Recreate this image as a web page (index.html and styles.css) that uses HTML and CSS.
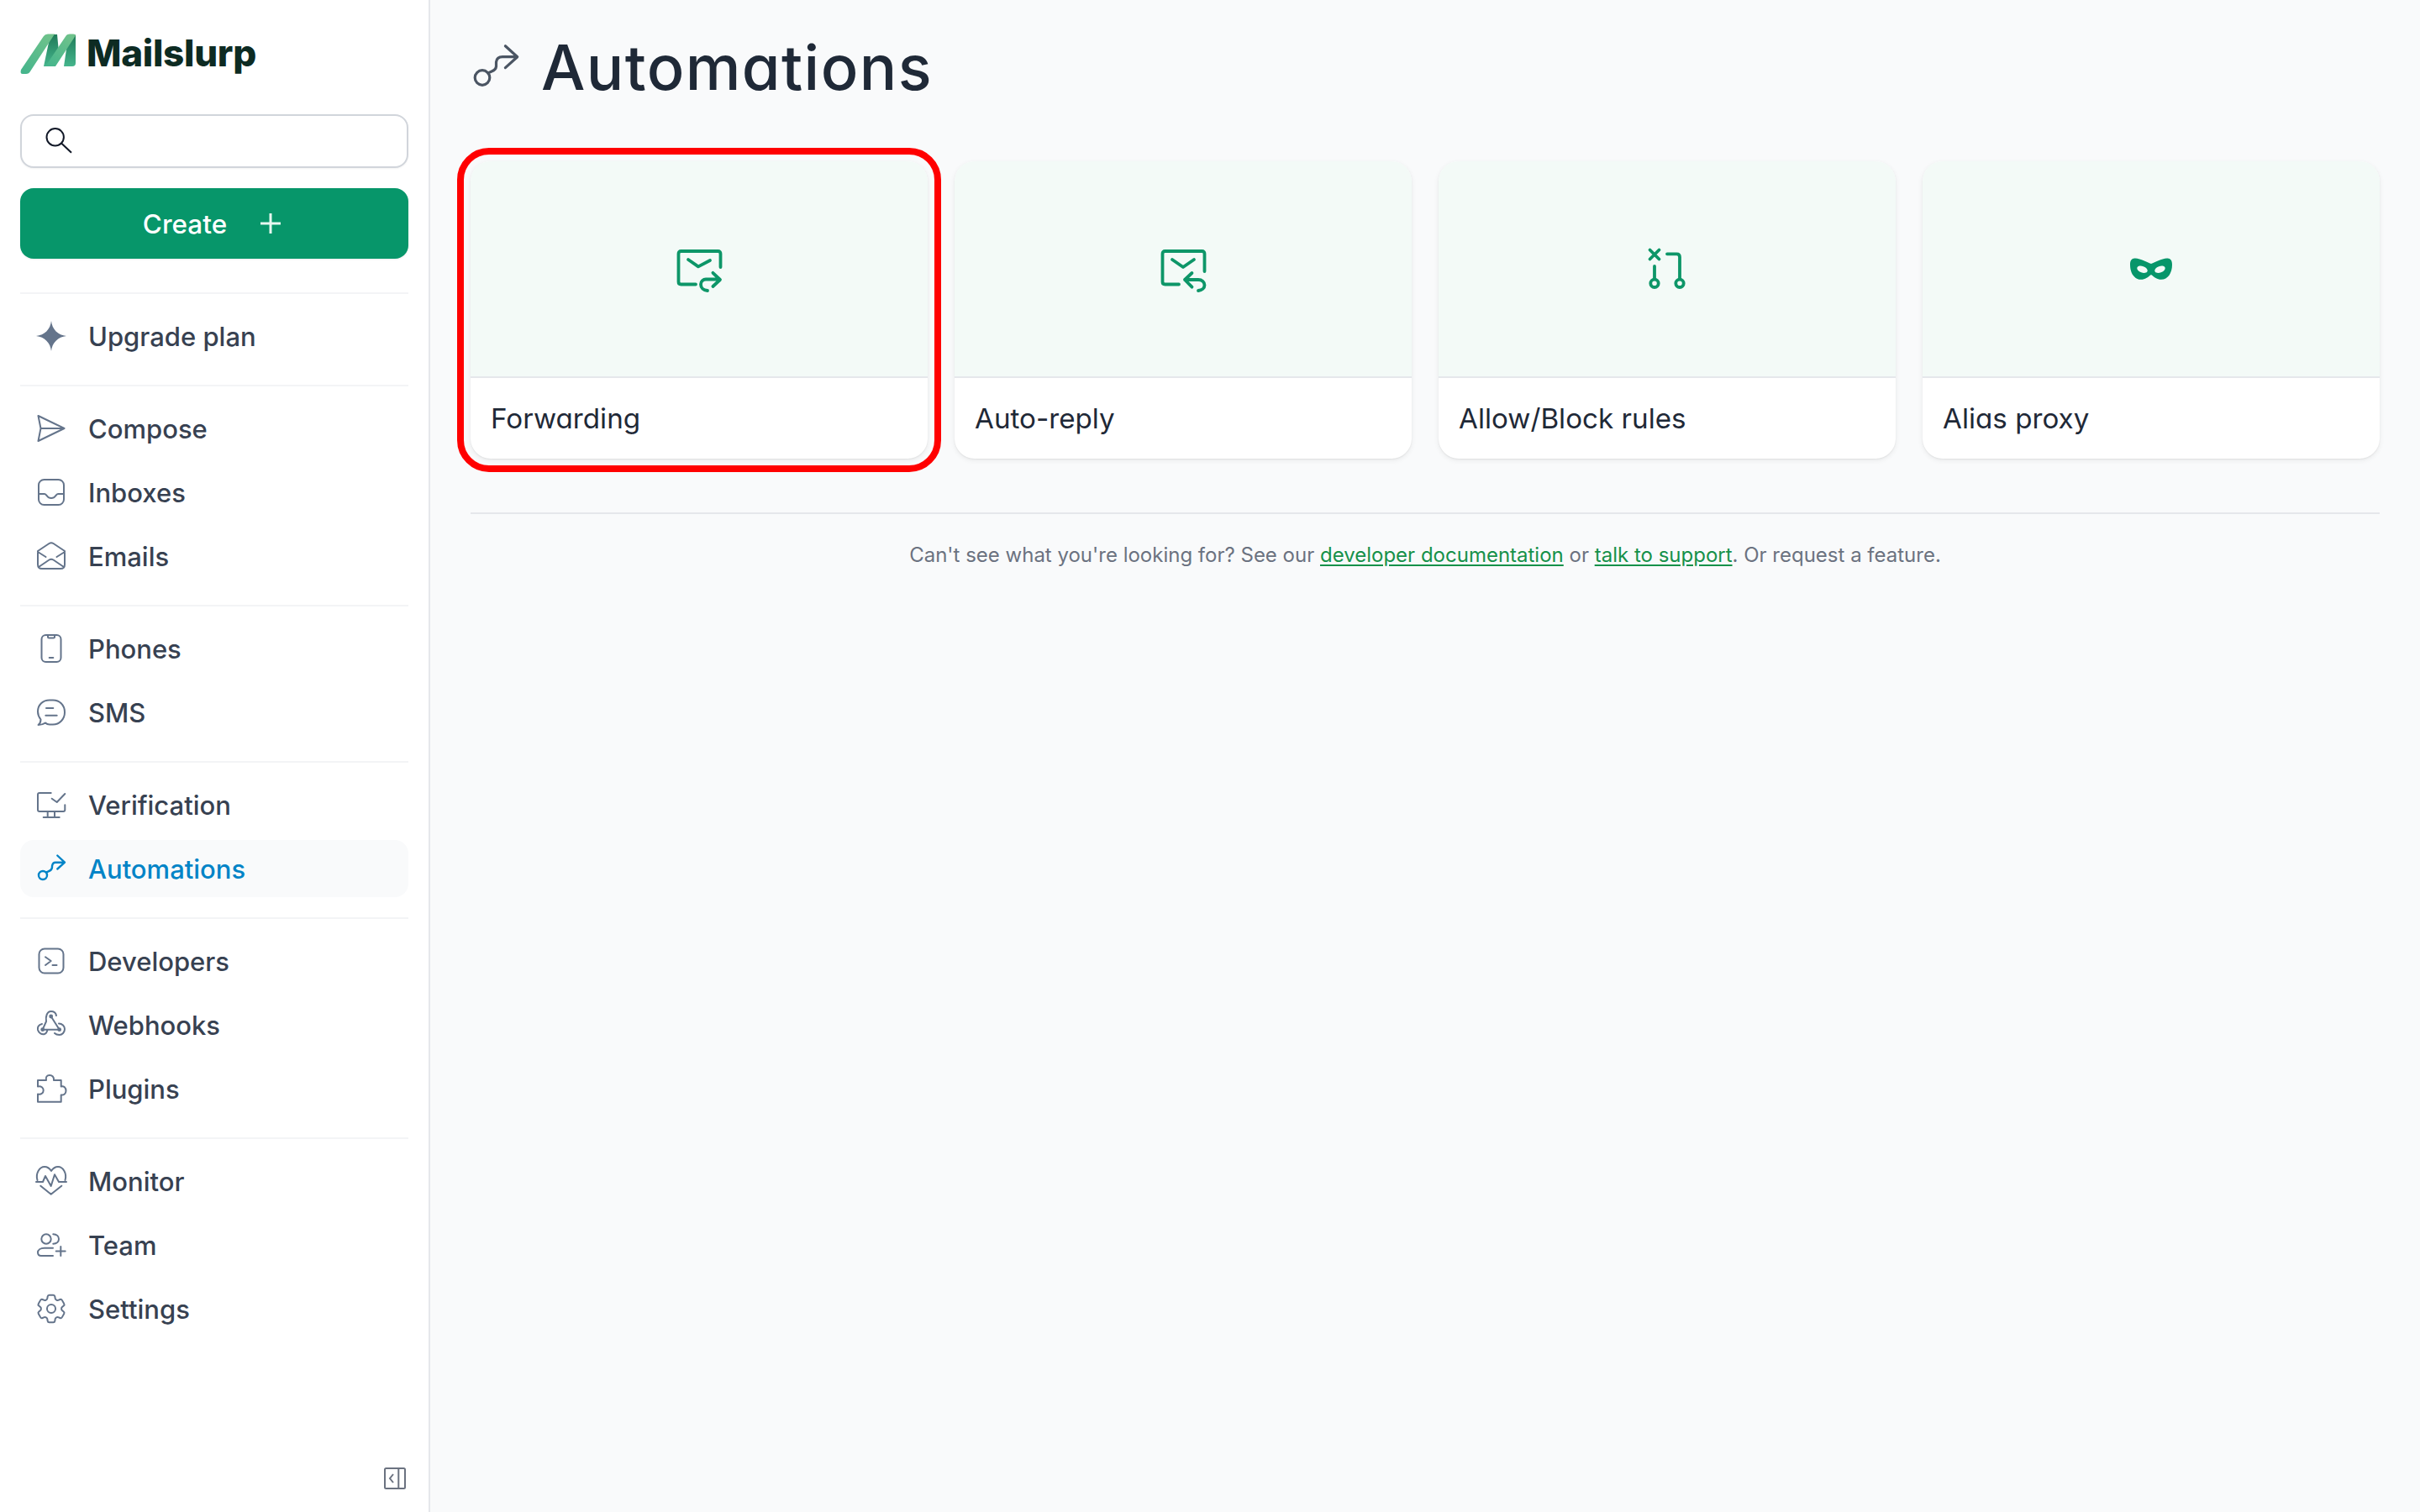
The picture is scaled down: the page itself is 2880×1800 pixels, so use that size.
FILE: index.html
```html
<!DOCTYPE html>
<html lang="en">
<head>
<meta charset="utf-8">
<title>Automations - Mailslurp</title>
<link rel="stylesheet" href="styles.css">
</head>
<body>
<div class="app">
  <aside class="sidebar">
    <div class="brand">
      <svg class="brand-mark" viewBox="0 0 66 48">
        <defs>
          <linearGradient id="lg1" x1="0.8" y1="0" x2="0.1" y2="1"><stop offset="0" stop-color="#6fc28b"/><stop offset="1" stop-color="#45b58c"/></linearGradient>
          <linearGradient id="lg2" x1="0.5" y1="0" x2="0.5" y2="1"><stop offset="0" stop-color="#1f7a58"/><stop offset="1" stop-color="#45b58c"/></linearGradient>
        </defs>
        <path fill="url(#lg2)" d="M36 1H44L46 22L38 39H28Z"/>
        <path fill="url(#lg2)" d="M56 12L66 1V35Q66 39 62 39H52Z"/>
        <path fill="url(#lg1)" d="M1 43L28 3Q29.500 .5 33 .5H41L12 45Q10.500 48 7 48H3Q-.5 48 1 43Z"/>
        <path fill="url(#lg1)" d="M30 39L55 2Q56 .5 59 .5H63Q66.500 .5 65.500 3L42 39Z"/>
      </svg>
      <span class="brand-name">Mailslurp</span>
    </div>
    <div class="search">
      <svg class="search-icon" viewBox="0 0 32 32"><circle cx="11.700" cy="11.300" r="10.200"/><path d="M19.300 18.700L31 29.700"/></svg>
    </div>
    <button class="create"><span>Create</span>
      <svg class="create-plus" viewBox="0 0 24 24"><path d="M12 0V24M0 12H24"/></svg>
    </button>

    <nav class="group">
      <a class="item"><svg class="ic" viewBox="0 0 36 36"><path class="solid" d="M18 0C19 10 26 17 36 18C26 19 19 26 18 36C17 26 10 19 0 18C10 17 17 10 18 0Z"/></svg>Upgrade plan</a>
    </nav>
    <nav class="group">
      <a class="item"><svg class="ic" viewBox="0 0 36 36"><path d="M2.500 3L33.500 18L2.500 33L5.500 18ZM5.500 18H33.500"/></svg>Compose</a>
      <a class="item"><svg class="ic" viewBox="0 0 36 36"><rect x="3" y="3" width="30" height="30" rx="6.500"/><path d="M3 20H10C11.500 20 12 21 13 22.500C14 24 16 25 18 25C20 25 22 24 23 22.500C24 21 24.500 20 26 20H33"/></svg>Inboxes</a>
      <a class="item"><svg class="ic" viewBox="0 0 36 36"><path d="M2 12L15.500 3Q18 1.500 20.500 3L34 12V28Q34 33 29 33H7Q2 33 2 28ZM2 13L11.500 19M34 13L24.500 19M3 31L15.500 22.500Q18 21 20.500 22.500L33 31"/></svg>Emails</a>
    </nav>
    <nav class="group">
      <a class="item"><svg class="ic" viewBox="0 0 36 36"><rect x="6.500" y="2" width="23" height="32" rx="5"/><path d="M14 3V4Q14 5.500 15.500 5.500H20.500Q22 5.500 22 4V3M15.700 29H20.300"/></svg>Phones</a>
      <a class="item"><svg class="ic" viewBox="0 0 36 36"><path d="M20 3.500H16C8 3.500 2 9 2 17C2 21 3.500 24 5.500 26.500C5.500 29 4.500 31.500 2.500 33C6 33 9 32 11 30.500C12.500 32 14 32.500 16 32.500H20C28 32.500 34 26 34 18C34 9.500 28 3.500 20 3.500ZM12 13H20.300M11.300 21.700H24.700"/></svg>SMS</a>
    </nav>
    <nav class="group">
      <a class="item"><svg class="ic" viewBox="0 0 36 36"><path d="M17.700 4H4Q2 4 2 6V24Q2 26 4 26H32.300Q34.300 26 34.300 24V18.300M13.700 26V33M22 26V33M8.700 33H27.700M18.700 10.700L24.700 15L34.300 5"/></svg>Verification</a>
      <a class="item active"><svg class="ic" viewBox="0 0 36 36"><circle cx="8" cy="26" r="5"/><path d="M12 22.500C15 21 18.500 21 19 16.500V15C19.500 12 21 10.700 23 10.700H33.500M25.300 2.500L34 10.700L25.300 18.500"/></svg>Automations</a>
    </nav>
    <nav class="group">
      <a class="item"><svg class="ic" viewBox="0 0 36 36"><rect x="3.500" y="3.500" width="29" height="29" rx="6.500"/><path d="M11 13.300L17.700 18L11 23M19.500 23H24.500"/></svg>Developers</a>
      <a class="item"><svg class="ic" viewBox="0 0 36 36"><path d="M7.700 23.700L12 14C11 8 13 2 17.700 2C21 2 23.500 4 24 7M7 17C3 18 1.500 21 2 24C3 28 7 30 10 29C12 28.500 13 26 13.500 24M27 16.500C31 16.500 34 19.500 34 23C34 27 31 30 27.700 30C25 30 23 29 22 28M17.700 8L27.700 23.700H7.700"/><circle class="solid" cx="17.700" cy="8" r="2.400"/><circle class="solid" cx="7.700" cy="23.700" r="2.400"/><circle class="solid" cx="27.700" cy="23.700" r="2.400"/></svg>Webhooks</a>
      <a class="item"><svg class="ic ic-wide" viewBox="0 0 36 36"><path d="M2 8H12C11 4 13 2 16 2C19 2 21.500 4 21 8H29.700V15.500C33 14.500 35.500 17 35.500 20.500C35.500 24 33 26 29.700 25.500V33.700H2V24.500C6 25.500 8.700 23 8.700 20C8.700 17 6 14.500 2 15.500Z"/></svg>Plugins</a>
    </nav>
    <nav class="group">
      <a class="item"><svg class="ic" viewBox="0 0 36 36"><path d="M1.500 17C-1 9 4 1 10 1C13 1 16 3 18 6C20 3 23 1 26 1C32 1 37 9 34.500 17M0 19H8L11 12L17.700 24L22 10.300L27 19H36M5.300 23.700L17.700 33.700L30.300 23.700"/></svg>Monitor</a>
      <a class="item"><svg class="ic" viewBox="0 0 36 36"><circle cx="12" cy="11" r="5.700"/><path d="M20.300 5.300C24.500 5.500 27 8 27 11C27 14 24.500 16.500 20.300 16.700M20 21.700H10C5 21.700 2 24 2 27C2 29 3 31 6 31H20M23.700 25.500H34.700M29.300 20V31"/></svg>Team</a>
      <a class="item"><svg class="ic ic-gear" viewBox="2 2 20 20"><path d="M9.594 3.940c.09-.542.56-.94 1.110-.94h2.593c.55 0 1.020.398 1.110.94l.213 1.281c.063.374.313.686.645.870.074.040.147.083.22.127.325.196.72.257 1.075.124l1.217-.456a1.125 1.125 0 0 1 1.370.490l1.296 2.247a1.125 1.125 0 0 1-.26 1.431l-1.003.827c-.293.241-.438.613-.43.992a7.723 7.723 0 0 1 0 .255c-.008.378.137.75.43.991l1.004.827c.424.35.534.955.26 1.430l-1.298 2.247a1.125 1.125 0 0 1-1.369.491l-1.217-.456c-.355-.133-.75-.072-1.076.124a6.470 6.470 0 0 1-.22.128c-.331.183-.581.495-.644.869l-.213 1.281c-.09.543-.56.94-1.110.94h-2.594c-.55 0-1.019-.398-1.110-.94l-.213-1.281c-.062-.374-.312-.686-.644-.870a6.520 6.520 0 0 1-.22-.127c-.325-.196-.72-.257-1.076-.124l-1.217.456a1.125 1.125 0 0 1-1.369-.49l-1.297-2.247a1.125 1.125 0 0 1 .26-1.431l1.004-.827c.292-.24.437-.613.43-.991a6.932 6.932 0 0 1 0-.255c.007-.38-.138-.751-.43-.992l-1.004-.827a1.125 1.125 0 0 1-.26-1.430l1.297-2.247a1.125 1.125 0 0 1 1.370-.491l1.216.456c.356.133.751.072 1.076-.124.072-.044.146-.086.22-.128.332-.183.582-.495.644-.869l.214-1.280Z"/><circle cx="12" cy="12" r="2.800"/></svg>Settings</a>
    </nav>

    <button class="collapse" aria-label="Collapse">
      <svg viewBox="0 0 26 26"><rect x="1" y="1" width="24" height="24" rx="1.500"/><path d="M17.300 1V25M11 8L7 13L11 18"/></svg>
    </button>
  </aside>

  <main class="main">
    <header class="head">
      <svg class="head-icon" viewBox="0 0 60 60"><circle cx="14" cy="44.500" r="8.800"/><path d="M21 39C25 36 30 37 30.500 31V26C31 21 34 19.700 38 19.700H55.500M41.400 6.800L55.700 19.700L41.400 32.600"/></svg>
      <h1 class="title">Automations</h1>
    </header>

    <section class="cards">
      <article class="card card-marked">
        <div class="card-top">
          <svg class="card-icon" viewBox="0 -2 54 52"><path d="M52.500 22V6Q52.500 3 49.500 3H5.500Q2.500 3 2.500 6V39.500Q2.500 42.500 5.500 42.500H23M14 13L26 21.400L40 14M37 50C32 49.500 29 46.500 29 42.500C29 39 32 36.500 35 36.500H51.500M43.400 28.800L52 37L43.400 45"/></svg>
        </div>
        <div class="card-label">Forwarding</div>
      </article>
      <article class="card">
        <div class="card-top">
          <svg class="card-icon" viewBox="0 -2 54 52"><path d="M52.500 27V6Q52.500 3 49.500 3H5.500Q2.500 3 2.500 6V39.500Q2.500 42.500 5.500 42.500H22M14 13L27 22L40 13M37.500 29L29 37L37.500 45.700M29 37H45C49.500 37 52.500 40 52.500 43.500C52.500 47 49.500 49.500 45 50"/></svg>
        </div>
        <div class="card-label">Auto-reply</div>
      </article>
      <article class="card">
        <div class="card-top">
          <svg class="card-icon card-icon-rules" viewBox="0 0 48 48"><path d="M3.500 1.500L14.500 12.500M14.500 1.500L3.500 12.500M9 21V36M24 6.300H35.500Q39 6.300 39 10V36"/><circle cx="9" cy="41.300" r="4.700"/><circle cx="39" cy="41.300" r="4.700"/></svg>
        </div>
        <div class="card-label">Allow/Block rules</div>
      </article>
      <article class="card">
        <div class="card-top">
          <svg class="card-mask" viewBox="0 0 50 26"><path class="mask-fill" d="M25 7C20 5 13 1 6 .5C2 .2 0 3 0 8C0 18 5 25.800 13 25.800C18 25.800 21 23 25 20C29 23 32 25.800 37 25.800C45 25.800 50 18 50 8C50 3 48 .2 44 .5C37 1 30 5 25 7Z"/><ellipse class="mask-eye mask-eye-left" cx="14.500" cy="13.700" rx="6.500" ry="3.800"/><ellipse class="mask-eye mask-eye-right" cx="35.500" cy="13.700" rx="6.500" ry="3.800"/></svg>
        </div>
        <div class="card-label">Alias proxy</div>
      </article>
    </section>

    <hr class="rule">
    <p class="note">Can't see what you're looking for? See our <a class="note-link">developer documentation</a> or <a class="note-link">talk to support</a>. Or request a feature.</p>
  </main>
</div>
</body>
</html>
```

FILE: styles.css
```css
* { box-sizing: border-box; }
html, body { margin: 0; padding: 0; height: 100%; }
body { font-family: "Inter", "Liberation Sans", sans-serif; background: #f9fafb; color: #374151; }
svg { display: block; flex: none; fill: none; }

.app { display: flex; width: 2880px; height: 1800px; overflow: hidden; }

.sidebar { display: flex; flex-direction: column; flex: none; width: 512px; height: 1800px; padding: 40px 24px 27px 24px; background: #fff; border-right: 2px solid #e5e7eb; }

.brand { display: flex; align-items: center; gap: 13px; height: 48px; margin-bottom: 48px; }
.brand-mark { width: 66px; height: 48px; overflow: visible; }
.brand-name { margin-top: -3px; font-size: 44px; font-weight: 800; color: #0d2b23; letter-spacing: -0.3px; line-height: 48px; }

.search { display: flex; align-items: center; height: 64px; padding-left: 28px; margin-bottom: 24px; background: #fff; border: 2px solid #d1d5db; border-radius: 16px; box-shadow: 0 1px 2px rgba(0,0,0,.05); }
.search-icon { width: 32px; height: 32px; stroke: #111827; stroke-width: 2; }

.create { display: flex; align-items: center; justify-content: center; gap: 40px; height: 84px; padding: 0 6px 0 0; margin-bottom: 40px; font: 500 31.500px "Inter", sans-serif; color: #fff; background: #07966a; border: 0; border-radius: 16px; box-shadow: 0 1px 2px rgba(0,0,0,.08); }
.create-plus { width: 24px; height: 24px; stroke: #e6f7ef; stroke-width: 3; stroke-linecap: round; }

.group { display: flex; flex-direction: column; gap: 8px; padding: 16px 0 24px; border-top: 2px solid #f3f4f6; }

.item { display: flex; align-items: center; gap: 26px; height: 68px; padding-left: 19px; font-size: 31px; font-weight: 500; color: #374151; border-radius: 16px; }
.item.active { color: #0284c7; background: #f9fafb; }

.ic { width: 36px; height: 36px; overflow: visible; stroke: #64748b; stroke-width: 2; stroke-linecap: round; stroke-linejoin: round; }
.ic .solid { fill: #64748b; stroke: none; }
.active .ic { stroke: #0284c7; stroke-width: 2.400; }
.ic-gear { stroke-width: 1.100; }

.collapse { align-self: flex-end; display: block; width: 26px; height: 26px; padding: 0; margin: auto 3px 0 0; background: none; border: 0; }
.collapse svg { width: 26px; height: 26px; stroke: #6b7280; stroke-width: 2; }

.main { flex: 1; min-width: 0; padding: 0 48px; }

.head { display: flex; align-items: center; gap: 24px; height: 160px; margin-bottom: 32px; }
.head-icon { width: 60px; height: 60px; margin-top: -4px; stroke: #4b5563; stroke-width: 3.200; stroke-linecap: round; stroke-linejoin: round; }
.title { margin: 0; font-size: 74px; font-weight: 500; letter-spacing: 1.400px; line-height: 80px; color: #1f2937; font-feature-settings: "cv11" 1; }

.cards { display: grid; grid-template-columns: repeat(4, 544px); gap: 32px; }
.card { position: relative; background: #fff; border-radius: 24px; box-shadow: 0 1px 2px rgba(0,0,0,.06), 0 2px 6px rgba(0,0,0,.07); }
.card-marked::after { content: ""; position: absolute; inset: -16px; border: 8px solid #ff0000; border-radius: 38px; }
.card-top { display: flex; align-items: center; justify-content: center; height: 258px; background: #f3faf7; border-bottom: 2px solid #e5e7eb; border-radius: 24px 24px 0 0; }
.card-icon { width: 54px; height: 52px; overflow: visible; stroke: #0d9668; stroke-width: 3.800; stroke-linecap: round; stroke-linejoin: round; }
.card-icon-rules { width: 48px; height: 48px; }
.card-mask { width: 50px; height: 26px; }
.mask-fill { fill: #07966a; }
.mask-eye { fill: #f3faf7; }
.mask-eye-left { transform: rotate(20deg); transform-origin: 14.500px 13.700px; }
.mask-eye-right { transform: rotate(-20deg); transform-origin: 35.500px 13.700px; }
.card-label { display: flex; align-items: center; height: 96px; padding: 0 0 1px 24px; font-size: 33.200px; font-weight: 400; color: #1f2937; font-feature-settings: "cv11" 1; }

.rule { height: 2px; margin: 64px 0 29px; background: #e5e7eb; border: 0; }
.note { margin: 0; font-size: 24px; line-height: 40px; text-align: center; color: #6b7280; }
.note-link { color: #16914a; text-decoration: underline; text-underline-offset: 3px; }
```
